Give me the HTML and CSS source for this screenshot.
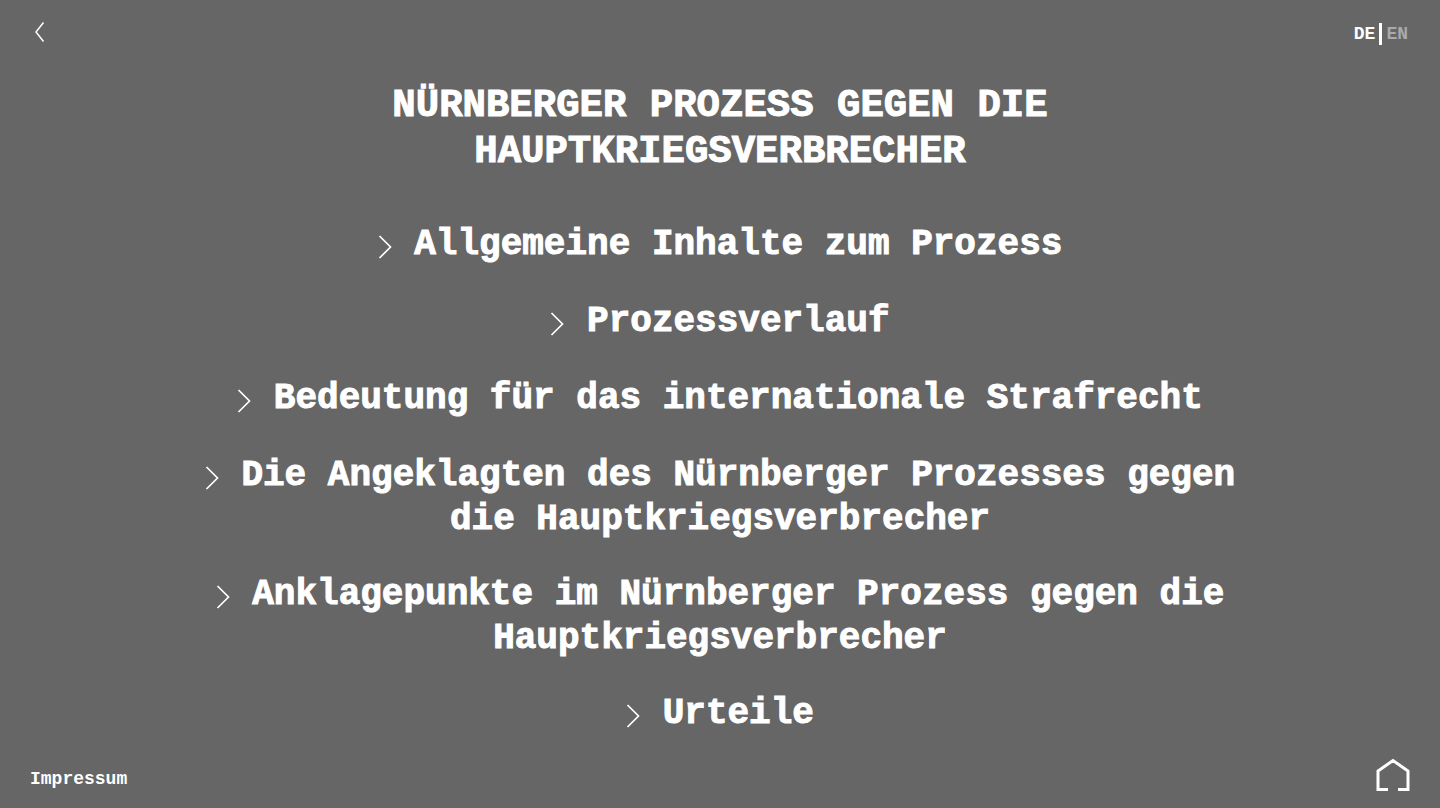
FILE: index.html
```
<!DOCTYPE html>
<html lang="de">

<head>
    <meta charset="UTF-8">
    <meta name="viewport" content="width=device-width, initial-scale=1.0">
    <title>Nürnberger Prozess gegen die Hauptkriegsverbrecher</title>
    <link rel="stylesheet" href="styles.css">
</head>

<body>
    <svg class="sprite" aria-hidden="true">
        <symbol id="chevron" viewBox="0 0 15 42">
            <path d="M1.5 10 L12.5 21 L1.5 32" fill="none" stroke="currentColor" stroke-width="1.7" />
        </symbol>
    </svg>

    <header class="header">
        <a class="back" href="#" aria-label="Zurück">
            <svg width="10" height="20" viewBox="0 0 10 20">
                <path d="M8.5 0.5 L1 10 L8.5 19.5" fill="none" stroke="currentColor" stroke-width="1.5" />
            </svg>
        </a>
        <nav class="languages">
            <a class="language active" href="#de">DE</a>
            <a class="language" href="#en">EN</a>
        </nav>
    </header>

    <main class="content">
        <h1 class="title">Nürnberger Prozess gegen die Hauptkriegsverbrecher</h1>
        <ul class="topics">
            <li><a href="#inhalte"><svg class="chevron"><use href="#chevron" /></svg> Allgemeine Inhalte zum Prozess</a></li>
            <li><a href="#verlauf"><svg class="chevron"><use href="#chevron" /></svg> Prozessverlauf</a></li>
            <li><a href="#bedeutung"><svg class="chevron"><use href="#chevron" /></svg> Bedeutung für das internationale Strafrecht</a></li>
            <li><a href="#angeklagte"><svg class="chevron"><use href="#chevron" /></svg> Die Angeklagten des Nürnberger Prozesses gegen die Hauptkriegsverbrecher</a></li>
            <li><a href="#anklage"><svg class="chevron"><use href="#chevron" /></svg> Anklagepunkte im Nürnberger Prozess gegen die Hauptkriegsverbrecher</a></li>
            <li><a href="#urteile"><svg class="chevron"><use href="#chevron" /></svg> Urteile</a></li>
        </ul>
    </main>

    <footer class="footer">
        <a class="imprint" href="#impressum">Impressum</a>
        <a class="home" href="#" aria-label="Startseite">
            <svg width="34" height="34" viewBox="0 0 34 34">
                <path d="M12 31.5 H2 V13 L17 2.5 L32 13 V31.5 H22" fill="none" stroke="currentColor" stroke-width="3" />
            </svg>
        </a>
    </footer>
</body>

</html>
```
FILE: styles.css
```
* {
    margin: 0;
    padding: 0;
    box-sizing: border-box;
}

body {
    font-family: 'Liberation Mono', 'Courier New', monospace;
    font-size: 18px;
    font-weight: 700;
    background-color: #666666;
    color: #ffffff;
    min-height: 100vh;
    display: flex;
    flex-direction: column;
}

a {
    color: inherit;
    text-decoration: none;
}

a:hover {
    opacity: 0.8;
}

.sprite {
    display: none;
}

.header {
    height: 64px;
    padding: 0 32px;
    display: flex;
    justify-content: space-between;
    align-items: center;
}

.back svg,
.home svg {
    display: block;
}

.back {
    padding: 0 3px;
}

.languages {
    display: flex;
    padding-top: 4px;
    line-height: 22px;
}

.language {
    color: #aaaaaa;
}

.language.active {
    color: #ffffff;
    border-right: 3px solid #ffffff;
    padding-right: 4px;
    margin-right: 4px;
}

.content {
    flex: 1;
    width: 75%;
    margin: 0 auto;
    padding-top: 19px;
    text-align: center;
}

.title {
    font-size: 39px;
    line-height: 46px;
    text-transform: uppercase;
    width: 66%;
    margin: 0 auto 49px;
    -webkit-text-stroke: 1px;
}

.topics {
    list-style: none;
    font-size: 36px;
    line-height: 42px;
    display: flex;
    flex-direction: column;
    gap: 33px;
    -webkit-text-stroke: 1px;
}

.chevron {
    width: 15px;
    height: 42px;
    vertical-align: -14px;
}

.footer {
    padding: 0 30px 16px;
    display: flex;
    justify-content: space-between;
    align-items: center;
}

.imprint {
    padding-top: 8px;
}
```
